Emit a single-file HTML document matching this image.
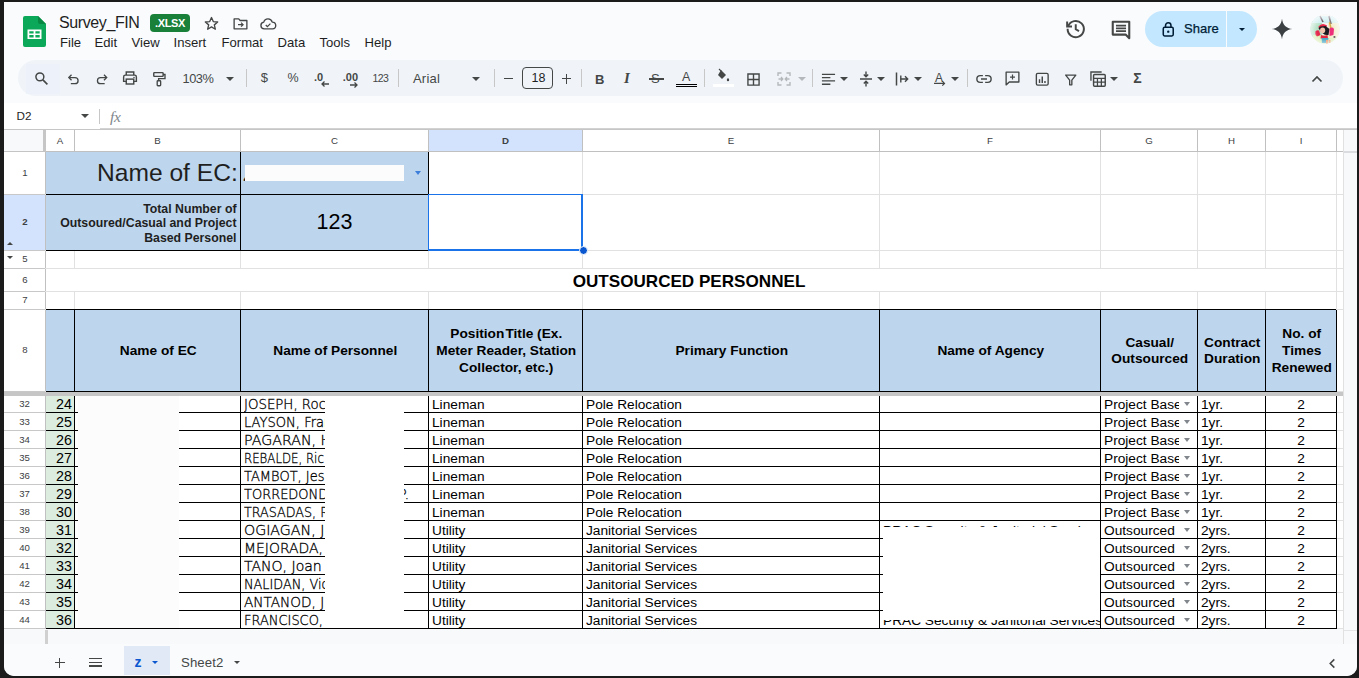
<!DOCTYPE html>
<html lang="en"><head><meta charset="utf-8"><title>Survey_FIN - Google Sheets</title>
<style>
*{box-sizing:border-box;margin:0;padding:0}
html,body{width:1359px;height:678px;overflow:hidden;background:#1b1b1b}
body{position:relative;font-family:"Liberation Sans","DejaVu Sans",sans-serif;color:#1f1f1f}
.abs{position:absolute}
#app{position:absolute;left:4px;top:2px;width:1353px;height:674px;background:#f9fbfd;border-radius:0 0 10px 10px;overflow:hidden}
/* everything inside #root positioned in page coordinates */
#root{position:absolute;left:-4px;top:-2px;width:1359px;height:678px}
.t{position:absolute;white-space:nowrap;line-height:1}
.menu{font-size:13.100px;color:#1f1f1f;top:36px}
.pill{position:absolute;left:18px;top:60px;width:1325px;height:36px;border-radius:18px;background:#f0f4f9}
.sep{position:absolute;top:69px;width:1px;height:18px;background:#c7c7c7}
.ic{position:absolute;overflow:visible}
.dd{position:absolute;width:0;height:0;border-left:4px solid transparent;border-right:4px solid transparent;border-top:4px solid #444746}
.hdr{position:absolute;background:#fff;color:#3c4043;font-size:9.700px;text-align:center}
.cell{position:absolute;overflow:hidden;white-space:nowrap}
.blue{background:#bed6ed}
.vl{position:absolute;width:1px;background:#e1e1e1}
.hl{position:absolute;height:1px;background:#e1e1e1}
.bk{position:absolute;background:#000}
.h8{position:absolute;padding:1.500px 0 0 1.500px;display:flex;align-items:center;justify-content:center;text-align:center;font-weight:bold;font-size:13.700px;line-height:16.600px;color:#000}
.d{position:absolute;font-size:13.700px;line-height:18px;height:18px;color:#000;white-space:nowrap;overflow:hidden}

.nm{font-family:"DejaVu Sans","Liberation Sans",sans-serif;font-weight:200;font-size:13.500px;-webkit-text-stroke:.3px #000;white-space:pre}
.rn{position:absolute;left:5px;width:40px;text-align:center;font-size:9.600px;color:#3c4043}
</style></head><body>
<div id="app"><div id="root">


<!-- sheets logo -->
<svg class="ic" style="left:23px;top:16px" width="23" height="31" viewBox="0 0 23 31">
 <path d="M2 0h13l8 8v21a2 2 0 0 1-2 2H2a2 2 0 0 1-2-2V2a2 2 0 0 1 2-2z" fill="#0aa858"/>
 <path d="M15 0l8 8h-6a2 2 0 0 1-2-2z" fill="#078943"/>
 <path d="M4.500 13.500h14v9.500h-14z M6.300 15.200v2.300h4.300v-2.300z M12.400 15.200v2.300h4.300v-2.300z M6.300 19.100v2.300h4.300v-2.300z M12.400 19.100v2.300h4.300v-2.300z" fill="#fff" fill-rule="evenodd"/>
</svg>
<div class="t" style="left:59px;top:15px;font-size:16px;color:#1f1f1f;letter-spacing:-.4px">Survey_FIN</div>
<div class="abs" style="left:150px;top:14px;width:40px;height:18px;border-radius:4px;background:#188038"></div>
<div class="t" style="left:155px;top:17.700px;font-size:11px;font-weight:bold;color:#fff;letter-spacing:-.35px">.XLSX</div>
<!-- star -->
<svg class="ic" style="left:202.800px;top:14.600px" width="17" height="17" viewBox="0 0 24 24"><path d="M12 3.600l2.500 5.700 6.200.55-4.700 4.100 1.400 6.100L12 16.800 6.600 20.050l1.400-6.100-4.700-4.100 6.200-.55z" fill="none" stroke="#444746" stroke-width="1.900" stroke-linejoin="round"/></svg>
<!-- move folder -->
<svg class="ic" style="left:231.500px;top:14.800px" width="17" height="17" viewBox="0 0 24 24"><path d="M3 5.500h6.500l2 2.300H21v11.700H3z" fill="none" stroke="#444746" stroke-width="1.900" stroke-linejoin="round"/><path d="M8.500 13.600h6.500M12.800 10.800l2.800 2.800-2.800 2.800" fill="none" stroke="#444746" stroke-width="1.800"/></svg>
<!-- cloud -->
<svg class="ic" style="left:259px;top:14.800px" width="18" height="18" viewBox="0 0 24 24"><path d="M7 18.500a4.500 4.500 0 0 1-.6-8.950A5.800 5.800 0 0 1 17.600 9.500 4.200 4.200 0 0 1 18 18.500z" fill="none" stroke="#444746" stroke-width="1.800" stroke-linejoin="round"/><path d="M9 13.300l2.200 2.200 4-4" fill="none" stroke="#444746" stroke-width="1.700"/></svg>

<div class="t menu" style="left:60px">File</div>
<div class="t menu" style="left:94.5px">Edit</div>
<div class="t menu" style="left:131.5px">View</div>
<div class="t menu" style="left:173.5px">Insert</div>
<div class="t menu" style="left:221.5px">Format</div>
<div class="t menu" style="left:277.5px">Data</div>
<div class="t menu" style="left:319.5px">Tools</div>
<div class="t menu" style="left:364.5px">Help</div>

<!-- history -->
<svg class="ic" style="left:1063.700px;top:17px" width="23.500" height="23.500" viewBox="0 0 24 24"><path d="M4.300 9.200A8.300 8.300 0 1 1 3.700 12" fill="none" stroke="#444746" stroke-width="2"/><path d="M3.200 4.600v5h5" fill="none" stroke="#444746" stroke-width="2"/><path d="M12 7.500v5l3.300 2" fill="none" stroke="#444746" stroke-width="2"/></svg>
<!-- comment -->
<svg class="ic" style="left:1110px;top:18.500px" width="22" height="22" viewBox="0 0 24 24"><path d="M3 3h18v18l-4-4H3z" fill="none" stroke="#444746" stroke-width="2.300" stroke-linejoin="round"/><path d="M6.500 7.200h11M6.500 10.200h11M6.500 13.200h11" stroke="#444746" stroke-width="1.900"/></svg>
<!-- share -->
<div class="abs" style="left:1145px;top:11px;width:81px;height:36px;border-radius:18px 0 0 18px;background:#c2e7ff"></div>
<div class="abs" style="left:1227px;top:11px;width:30px;height:36px;border-radius:0 18px 18px 0;background:#c2e7ff"></div>
<svg class="ic" style="left:1161.200px;top:20.500px" width="14.500" height="16.300" viewBox="0 0 16 18"><rect x="2.500" y="7" width="11" height="9.500" rx="1.500" fill="none" stroke="#001d35" stroke-width="1.700"/><path d="M5 7V5a3 3 0 0 1 6 0v2" fill="none" stroke="#001d35" stroke-width="1.700"/><circle cx="8" cy="11.800" r="1.300" fill="#001d35"/></svg>
<div class="t" style="left:1184px;top:21.500px;font-size:13px;color:#001d35;-webkit-text-stroke:.25px #001d35">Share</div>
<div class="dd" style="left:1238.500px;top:28px;border-top-color:#001d35;border-left-width:3.500px;border-right-width:3.500px;border-top-width:3.500px"></div>
<!-- gemini star -->
<svg class="ic" style="left:1270px;top:17px" width="24" height="24" viewBox="0 0 24 24"><path d="M12 1.500C12.600 7.800 16.200 11.400 22.500 12 16.200 12.600 12.600 16.200 12 22.500 11.400 16.200 7.800 12.600 1.500 12 7.800 11.400 11.400 7.800 12 1.500z" fill="#3c4043"/></svg>
<!-- avatar -->
<svg class="ic" style="left:1310px;top:14px" width="30" height="30" viewBox="0 0 30 30"><defs><clipPath id="av"><circle cx="15" cy="15" r="14.500"/></clipPath><radialGradient id="avg" cx="50%" cy="55%" r="50%"><stop offset="55%" stop-color="#fff" stop-opacity="0"/><stop offset="100%" stop-color="#fbfcfd" stop-opacity=".7"/></radialGradient></defs><g clip-path="url(#av)"><rect width="30" height="30" fill="#f4f2ee"/><path d="M0 7h12v16H0z" fill="#b4e1c6"/><path d="M3 21h24v9H3z" fill="#dcefb8"/><path d="M18 6h12v18H18z" fill="#f3eccb"/><path d="M2 2h26v7H2z" fill="#cdeef0"/><path d="M10 2l3 6M19 2l2 8" stroke="#5b4a55" stroke-width="1.600"/><path d="M19.500 8l2 9" stroke="#d8a84a" stroke-width="1.500"/><path d="M8.500 12.500q3.500-4.500 8.500-1l-1 3.500h-7z" fill="#e8274b"/><path d="M8.500 14q4 8 10 7l1-6-4-3-5 .5z" fill="#1c1c20"/><ellipse cx="12.600" cy="16.300" rx="2.600" ry="2.900" fill="#f2c4ae"/><path d="M5.500 17.500q1.500-2 3.500-1l1.500 4.500-3.500 1.500q-2.500-2-1.500-5z" fill="#e42a4c"/><path d="M11 21q3 1.500 6.500 0l.5 3.500h-7.500z" fill="#e62640"/><path d="M19.500 14.500q3-2 4.500.5l-.5 6-4 1z" fill="#ee2f7a"/><path d="M11.500 24h7l-.5 5h-6z" fill="#4aa7c4"/><path d="M16 26h2v4h-2zM18.800 26h1.700v4h-1.700z" fill="#f0936c"/><circle cx="24.500" cy="23" r="1.100" fill="#111"/><rect width="30" height="30" fill="url(#avg)"/></g></svg>

<div class="pill"></div>
<div class="abs" style="left:26px;top:64px;width:34px;height:30px;background:#edf2fa"></div>
<svg class="ic" style="left:33.3px;top:69.5px" width="17" height="17" viewBox="0 0 24 24"><circle cx="9.700" cy="9.700" r="5.600" fill="none" stroke="#444746" stroke-width="2.100"/><path d="M14 14l6.300 6.300" stroke="#444746" stroke-width="2.300"/></svg>
<svg class="ic" style="left:64.75px;top:70.75px" width="16.5" height="16.5" viewBox="0 0 24 24"><path d="M6.500 9.500H14.500a4.500 4.500 0 0 1 0 9H8.500" fill="none" stroke="#444746" stroke-width="1.900"/><path d="M9.500 5.500l-4 4 4 4" fill="none" stroke="#444746" stroke-width="1.900"/></svg>
<svg class="ic" style="left:93.55px;top:70.75px" width="16.5" height="16.5" viewBox="0 0 24 24"><path d="M17.500 9.500H9.500a4.500 4.500 0 0 0 0 9H15.500" fill="none" stroke="#444746" stroke-width="1.900"/><path d="M14.500 5.500l4 4-4 4" fill="none" stroke="#444746" stroke-width="1.900"/></svg>
<svg class="ic" style="left:121.0px;top:69.0px" width="18" height="18" viewBox="0 0 24 24"><path d="M7 8V4h10v4" fill="none" stroke="#444746" stroke-width="1.900"/><path d="M7 16.500H3.500v-6a2.300 2.300 0 0 1 2.300-2.300h12.400a2.300 2.300 0 0 1 2.300 2.300v6H17" fill="none" stroke="#444746" stroke-width="1.900"/><rect x="7" y="13.500" width="10" height="6.500" fill="none" stroke="#444746" stroke-width="1.900"/><circle cx="17.300" cy="11.200" r="1" fill="#444746"/></svg>
<svg class="ic" style="left:149.8px;top:69.5px" width="18" height="18" viewBox="0 0 24 24"><rect x="5" y="3.500" width="12.500" height="5" rx="1" fill="none" stroke="#444746" stroke-width="1.900"/><path d="M17.500 6H20v5.500h-8.500v3" fill="none" stroke="#444746" stroke-width="1.800"/><rect x="9.600" y="14.300" width="4.600" height="6.700" rx="1" fill="none" stroke="#444746" stroke-width="1.800"/></svg>
<div class="t" style="left:182.500px;top:73px;font-size:12.800px;letter-spacing:-.45px;color:#444746">103%</div>
<div class="dd" style="left:226px;top:77px;border-top-color:#444746"></div>
<div class="sep" style="left:246px"></div>
<div class="sep" style="left:398px"></div>
<div class="sep" style="left:494px"></div>
<div class="sep" style="left:581px"></div>
<div class="sep" style="left:704px"></div>
<div class="sep" style="left:812px"></div>
<div class="sep" style="left:966.5px"></div>
<div class="t" style="left:260.800px;top:71px;font-size:13px;color:#444746">$</div>
<div class="t" style="left:287.500px;top:72px;font-size:12.500px;color:#444746">%</div>
<div class="t" style="left:314px;top:71.500px;font-size:11px;font-weight:bold;color:#444746">.0</div>
<svg class="ic" style="left:321.0px;top:80.0px" width="8" height="8" viewBox="0 0 8 8"><path d="M8 4H1M3.500 1.500L1 4l2.500 2.500" fill="none" stroke="#444746" stroke-width="1.300"/></svg>
<div class="t" style="left:342.800px;top:71.500px;font-size:11px;font-weight:bold;color:#444746">.00</div>
<svg class="ic" style="left:350.0px;top:81.0px" width="8" height="8" viewBox="0 0 8 8"><path d="M0 4h7M4.500 1.500L7 4 4.500 6.500" fill="none" stroke="#444746" stroke-width="1.300"/></svg>
<div class="t" style="left:372.500px;top:73px;font-size:10.500px;letter-spacing:-.55px;color:#444746">123</div>
<div class="t" style="left:413px;top:72px;font-size:13px;color:#444746;letter-spacing:.2px">Arial</div>
<div class="dd" style="left:472px;top:77px;border-top-color:#444746"></div>
<div class="abs" style="left:503.500px;top:78.200px;width:9.500px;height:1.300px;background:#444746"></div>
<div class="abs" style="left:522px;top:67px;width:31px;height:22px;border:1px solid #444746;border-radius:4px"></div>
<div class="t" style="left:531.500px;top:72px;font-size:12.500px;color:#1f1f1f">18</div>
<div class="abs" style="left:561.700px;top:78.200px;width:9.600px;height:1.300px;background:#444746"></div><div class="abs" style="left:565.850px;top:74px;width:1.300px;height:9.600px;background:#444746"></div>
<div class="t" style="left:595px;top:72.500px;font-size:13px;font-weight:bold;color:#444746">B</div>
<div class="t" style="left:624px;top:71px;font-size:15px;font-style:italic;font-weight:bold;color:#444746;font-family:'Liberation Serif',serif">I</div>
<div class="t" style="left:651px;top:72px;font-size:13px;color:#444746">S</div><div class="abs" style="left:649px;top:78px;width:15px;height:1.500px;background:#444746"></div>
<div class="t" style="left:682px;top:70.500px;font-size:12.500px;color:#444746">A</div><div class="abs" style="left:676px;top:84px;width:21px;height:1px;background:#000"></div><div class="abs" style="left:676px;top:86px;width:21px;height:1px;background:#000"></div>
<svg class="ic" style="left:714.5px;top:67.5px" width="16" height="16" viewBox="0 0 24 24"><path d="M9 3l7.500 7.500-6 6L4.500 10.500z" fill="#444746"/><path d="M6 1.500l4 4" stroke="#444746" stroke-width="1.800"/><path d="M19.500 14.500c1 1.500 1.800 2.600 1.800 3.500a1.800 1.800 0 0 1-3.600 0c0-.9.800-2 1.800-3.500z" fill="#444746"/></svg>
<div class="abs" style="left:713px;top:84px;width:21px;height:3px;background:#fff"></div>
<svg class="ic" style="left:747.2px;top:72.5px" width="13" height="13" viewBox="0 0 14 14"><path d="M1 1h12v12H1zM7 1v12M1 7h12" fill="none" stroke="#444746" stroke-width="1.500"/></svg>
<svg class="ic" style="left:776.7px;top:72.0px" width="14" height="14" viewBox="0 0 14 14"><path d="M1 4V1h3.500M9.500 1H13v3M1 10v3h3.500M9.500 13H13v-3" fill="none" stroke="#b5b8bb" stroke-width="1.400"/><path d="M1.500 7h4M4 5l1.800 2L4 9M12.500 7h-4M10 5L8.200 7 10 9" fill="none" stroke="#b5b8bb" stroke-width="1.300"/></svg>
<div class="dd" style="left:798px;top:77px;border-top-color:#b5b8bb"></div>
<svg class="ic" style="left:820.7px;top:71.5px" width="15" height="15" viewBox="0 0 16 16"><path d="M1 2.500h14M1 6h9M1 9.500h14M1 13h9" stroke="#444746" stroke-width="1.500"/></svg>
<div class="dd" style="left:840px;top:77px;border-top-color:#444746"></div>
<svg class="ic" style="left:857.5px;top:71.0px" width="16" height="16" viewBox="0 0 16 16"><path d="M2 8h12" stroke="#444746" stroke-width="1.500"/><path d="M8 0.500v5M5.800 3.500L8 5.800l2.200-2.300M8 15.500v-5M5.800 12.500L8 10.200l2.200 2.300" fill="none" stroke="#444746" stroke-width="1.400"/></svg>
<div class="dd" style="left:877px;top:77px;border-top-color:#444746"></div>
<svg class="ic" style="left:894.0px;top:71.0px" width="16" height="16" viewBox="0 0 16 16"><path d="M2.500 1.500v13" stroke="#444746" stroke-width="1.500"/><path d="M6.800 4.500v7" stroke="#444746" stroke-width="1.400"/><path d="M6.800 8h7M11 5.300L13.700 8 11 10.700" fill="none" stroke="#444746" stroke-width="1.400"/></svg>
<div class="dd" style="left:914px;top:77px;border-top-color:#444746"></div>
<div class="t" style="left:935px;top:71.500px;font-size:12px;color:#444746">A</div>
<svg class="ic" style="left:934.25px;top:78.75px" width="10.5" height="10.5" viewBox="0 0 12 12"><path d="M0 5h12M9.500 2.500L12 5 9.500 7.500" fill="none" stroke="#444746" stroke-width="1.400"/></svg>
<div class="dd" style="left:951px;top:77px;border-top-color:#444746"></div>
<svg class="ic" style="left:975.3px;top:70.0px" width="18" height="18" viewBox="0 0 24 24"><path d="M10.500 7.500H7a4.500 4.500 0 0 0 0 9h3.500M13.500 7.500H17a4.500 4.500 0 0 1 0 9h-3.500M8 12h8" fill="none" stroke="#444746" stroke-width="1.900"/></svg>
<svg class="ic" style="left:1004.2px;top:70.3px" width="17" height="17" viewBox="0 0 24 24"><path d="M3 3h18v14H7.500L3 21z" fill="none" stroke="#444746" stroke-width="1.900" stroke-linejoin="round"/><path d="M12 6.500v7M8.500 10h7" stroke="#444746" stroke-width="1.700"/></svg>
<svg class="ic" style="left:1035.25px;top:72.05px" width="14.5" height="14.5" viewBox="0 0 16 16"><rect x="1.500" y="1.500" width="13" height="13" rx="1.500" fill="none" stroke="#444746" stroke-width="1.500"/><path d="M5 12V8M8 12V5M11 12v-2" stroke="#444746" stroke-width="1.600"/></svg>
<svg class="ic" style="left:1064.45px;top:72.75px" width="13.5" height="13.5" viewBox="0 0 16 16"><path d="M2 2.500h12L9.300 8.500V14H6.700V8.500z" fill="none" stroke="#444746" stroke-width="1.600" stroke-linejoin="round"/></svg>
<svg class="ic" style="left:1088.95px;top:69.75px" width="17.5" height="17.5" viewBox="0 0 18 18"><path d="M2 11V2h11" fill="none" stroke="#444746" stroke-width="1.400"/><rect x="4.700" y="4.700" width="12" height="12" rx="1" fill="none" stroke="#444746" stroke-width="1.500"/><path d="M4.700 8.500h12M4.700 12.500h12M8.700 8.500v8M12.700 8.500v8" stroke="#444746" stroke-width="1.300"/></svg>
<div class="dd" style="left:1110px;top:77px;border-top-color:#444746"></div>
<div class="t" style="left:1133.300px;top:71px;font-size:14px;font-weight:bold;color:#444746">&Sigma;</div>
<svg class="ic" style="left:1311.0px;top:73.0px" width="12" height="12" viewBox="0 0 12 12"><path d="M1.500 8.500L6 4l4.500 4.500" fill="none" stroke="#444746" stroke-width="1.700"/></svg>
<div class="abs" style="left:4px;top:103px;width:1353px;height:27px;background:#fff"></div>
<div class="abs" style="left:4px;top:129px;width:1353px;height:1px;background:#c6c6c6"></div><div class="abs" style="left:100px;top:128px;width:1257px;height:1px;background:#d2d2d2"></div>
<div class="t" style="left:16.500px;top:109.500px;font-size:11.700px;color:#1f1f1f">D2</div>
<div class="dd" style="left:80.6px;top:114px;border-top-color:#444746"></div>
<div class="abs" style="left:99px;top:109px;width:1px;height:15px;background:#c7c7c7"></div>
<div class="t" style="left:110px;top:108.500px;font-size:15.500px;font-style:italic;color:#80868b;font-family:'Liberation Serif',serif;letter-spacing:-.3px">fx</div>
<div class="abs" style="left:4px;top:130px;width:1353px;height:514px;background:#fff"></div>
<div class="abs" style="left:4px;top:130px;width:42px;height:22px;background:#f8f9fa"></div>
<div class="abs" style="left:43px;top:130px;width:3px;height:22px;background:#c6c6c6"></div>
<div class="abs" style="left:4px;top:151px;width:42px;height:1px;background:#c4c4c4"></div>
<div class="hdr" style="left:46px;top:130px;width:28px;height:21px;line-height:21px;background:#fff;font-weight:normal">A</div>
<div class="abs" style="left:74px;top:130px;width:1px;height:21px;background:#c0c0c0"></div>
<div class="hdr" style="left:75px;top:130px;width:165px;height:21px;line-height:21px;background:#fff;font-weight:normal">B</div>
<div class="abs" style="left:240px;top:130px;width:1px;height:21px;background:#c0c0c0"></div>
<div class="hdr" style="left:241px;top:130px;width:187px;height:21px;line-height:21px;background:#fff;font-weight:normal">C</div>
<div class="abs" style="left:428px;top:130px;width:1px;height:21px;background:#c0c0c0"></div>
<div class="hdr" style="left:429px;top:130px;width:153px;height:21px;line-height:21px;background:#d3e3fd;font-weight:bold">D</div>
<div class="abs" style="left:582px;top:130px;width:1px;height:21px;background:#c0c0c0"></div>
<div class="hdr" style="left:583px;top:130px;width:296px;height:21px;line-height:21px;background:#fff;font-weight:normal">E</div>
<div class="abs" style="left:879px;top:130px;width:1px;height:21px;background:#c0c0c0"></div>
<div class="hdr" style="left:880px;top:130px;width:220px;height:21px;line-height:21px;background:#fff;font-weight:normal">F</div>
<div class="abs" style="left:1100px;top:130px;width:1px;height:21px;background:#c0c0c0"></div>
<div class="hdr" style="left:1101px;top:130px;width:96px;height:21px;line-height:21px;background:#fff;font-weight:normal">G</div>
<div class="abs" style="left:1197px;top:130px;width:1px;height:21px;background:#c0c0c0"></div>
<div class="hdr" style="left:1198px;top:130px;width:67px;height:21px;line-height:21px;background:#fff;font-weight:normal">H</div>
<div class="abs" style="left:1265px;top:130px;width:1px;height:21px;background:#c0c0c0"></div>
<div class="hdr" style="left:1266px;top:130px;width:70px;height:21px;line-height:21px;background:#fff;font-weight:normal">I</div>
<div class="abs" style="left:1336px;top:130px;width:1px;height:21px;background:#c0c0c0"></div>
<div class="hdr" style="left:1337px;top:130px;width:6px;height:21px;line-height:21px;background:#fff;font-weight:normal"></div>
<div class="abs" style="left:1343px;top:130px;width:1px;height:21px;background:#c0c0c0"></div>
<div class="abs" style="left:46px;top:151px;width:1297px;height:1px;background:#c0c0c0"></div>
<div class="abs" style="left:1343px;top:130px;width:14px;height:514px;background:#f8f9fa"></div>
<div class="abs" style="left:1343px;top:151px;width:14px;height:2px;background:#dadce0"></div>
<div class="abs" style="left:1343px;top:130px;width:1px;height:514px;background:#e1e1e1"></div>
<div class="abs" style="left:4px;top:152px;width:41px;height:478px;background:#fff"></div>
<div class="abs" style="left:45px;top:152px;width:1px;height:478px;background:#c0c0c0"></div>
<div class="vl" style="left:74px;top:152px;height:158px"></div>
<div class="vl" style="left:240px;top:152px;height:158px"></div>
<div class="vl" style="left:428px;top:152px;height:158px"></div>
<div class="vl" style="left:582px;top:152px;height:158px"></div>
<div class="vl" style="left:879px;top:152px;height:158px"></div>
<div class="vl" style="left:1100px;top:152px;height:158px"></div>
<div class="vl" style="left:1197px;top:152px;height:158px"></div>
<div class="vl" style="left:1265px;top:152px;height:158px"></div>
<div class="vl" style="left:1336px;top:152px;height:158px"></div>
<div class="vl" style="left:1343px;top:152px;height:158px"></div>
<div class="hl" style="left:4px;top:194px;width:1339px"></div>
<div class="hl" style="left:4px;top:194px;width:41px;background:#c8c8c8"></div>
<div class="hl" style="left:4px;top:250px;width:1339px"></div>
<div class="hl" style="left:4px;top:250px;width:41px;background:#c8c8c8"></div>
<div class="hl" style="left:4px;top:268px;width:1339px"></div>
<div class="hl" style="left:4px;top:268px;width:41px;background:#c8c8c8"></div>
<div class="hl" style="left:4px;top:291px;width:1339px"></div>
<div class="hl" style="left:4px;top:291px;width:41px;background:#c8c8c8"></div>
<div class="hl" style="left:4px;top:309px;width:1339px"></div>
<div class="hl" style="left:4px;top:309px;width:41px;background:#c8c8c8"></div>
<div class="hl" style="left:4px;top:391px;width:1339px"></div>
<div class="hl" style="left:4px;top:391px;width:41px;background:#c8c8c8"></div>
<div class="abs" style="left:46px;top:269px;width:1290px;height:22px;background:#fff"></div>
<div class="rn t" style="top:167.5px;font-weight:normal;left:5px;width:40px">1</div>
<div class="abs" style="left:4px;top:195px;width:41px;height:55px;background:#d3e3fd"></div>
<div class="rn t" style="top:217.0px;font-weight:bold;left:5px;width:40px">2</div>
<div class="rn t" style="top:254.0px;font-weight:normal;left:5px;width:40px">5</div>
<div class="rn t" style="top:274.5px;font-weight:normal;left:5px;width:40px">6</div>
<div class="rn t" style="top:295.0px;font-weight:normal;left:5px;width:40px">7</div>
<div class="rn t" style="top:345.0px;font-weight:normal;left:5px;width:40px">8</div>
<div class="abs" style="left:7px;top:242px;width:0;height:0;border-left:3.500px solid transparent;border-right:3.500px solid transparent;border-bottom:3.500px solid #444746"></div>
<div class="abs" style="left:7px;top:256px;width:0;height:0;border-left:3.500px solid transparent;border-right:3.500px solid transparent;border-top:3.500px solid #444746"></div>
<div class="abs blue" style="left:46px;top:152px;width:382px;height:98px"></div>
<div class="bk" style="left:240px;top:152px;width:1px;height:99px"></div>
<div class="bk" style="left:428px;top:152px;width:1px;height:99px"></div>
<div class="bk" style="left:46px;top:194px;width:383px;height:1px"></div>
<div class="bk" style="left:46px;top:250px;width:383px;height:1px"></div>
<div class="t" style="left:97px;top:161px;font-size:24.600px;color:#1f1f1f">Name of EC:</div>
<div class="t" style="left:243px;top:161px;font-size:24.600px;color:#1f1f1f;width:4px;overflow:hidden;clip-path:inset(55% 0 0 0)">Z</div>
<div class="abs" style="left:245px;top:165px;width:159px;height:16px;background:#fcfcfc"></div>
<div class="dd" style="left:415px;top:171.300px;border-top-color:#3d7edb;border-left-width:3.700px;border-right-width:3.700px;border-top-width:4px"></div>
<div class="abs" style="left:50px;top:201.500px;width:186.500px;text-align:right;font-size:12.300px;font-weight:bold;line-height:14.600px;color:#1f1f1f">Total Number of<br>Outsoured/Casual and Project<br>Based Personel</div>
<div class="t" style="left:241px;top:212px;width:187px;text-align:center;font-size:21.500px;color:#000">123</div>
<div class="abs" style="left:428px;top:194px;width:155px;height:57px;border:solid #1a73e8;border-width:1px 2px 2px 1px;background:#fff"></div>
<div class="abs" style="left:578.800px;top:245.800px;width:9px;height:9px;border-radius:50%;background:#0b57d0;border:1px solid #fff"></div>
<div class="t" style="left:44px;top:272.500px;width:1290px;text-align:center;font-size:17.100px;font-weight:bold;color:#000">OUTSOURCED PERSONNEL</div>
<div class="abs blue" style="left:46px;top:310px;width:1290px;height:81px"></div>
<div class="bk" style="left:46px;top:309px;width:1291px;height:1px"></div>
<div class="bk" style="left:46px;top:391px;width:1291px;height:1px"></div>
<div class="bk" style="left:74px;top:309px;width:1px;height:83px"></div>
<div class="bk" style="left:240px;top:309px;width:1px;height:83px"></div>
<div class="bk" style="left:428px;top:309px;width:1px;height:83px"></div>
<div class="bk" style="left:582px;top:309px;width:1px;height:83px"></div>
<div class="bk" style="left:879px;top:309px;width:1px;height:83px"></div>
<div class="bk" style="left:1100px;top:309px;width:1px;height:83px"></div>
<div class="bk" style="left:1197px;top:309px;width:1px;height:83px"></div>
<div class="bk" style="left:1265px;top:309px;width:1px;height:83px"></div>
<div class="bk" style="left:1336px;top:309px;width:1px;height:83px"></div>
<div class="h8" style="left:75px;top:310px;width:165px;height:81px">Name of EC</div>
<div class="h8" style="left:241px;top:310px;width:187px;height:81px">Name of Personnel</div>
<div class="h8" style="left:429px;top:310px;width:153px;height:81px">Position&#8202;Title (Ex.<br>Meter Reader, Station<br>Collector, etc.)</div>
<div class="h8" style="left:583px;top:310px;width:296px;height:81px">Primary Function</div>
<div class="h8" style="left:880px;top:310px;width:220px;height:81px">Name of Agency</div>
<div class="h8" style="left:1101px;top:310px;width:96px;height:81px">Casual/<br>Outsourced</div>
<div class="h8" style="left:1198px;top:310px;width:67px;height:81px">Contract<br>Duration</div>
<div class="h8" style="left:1266px;top:310px;width:70px;height:81px">No. of<br>Times<br>Renewed</div>
<div class="abs" style="left:4px;top:392px;width:1339px;height:4px;background:#c6c6c6"></div>
<div class="rn t" style="top:398.5px;left:4px;width:41px">32</div>
<div class="abs" style="left:46px;top:396px;width:28px;height:16px;background:#dcecdf"></div>
<div class="d" style="left:46px;top:395px;width:26px;text-align:right;font-size:14.300px">24</div>
<div class="d nm" style="left:244.400px;top:394.5px;width:120px;transform:scaleX(0.9878);transform-origin:0 0">JOSEPH, Roc</div>
<div class="d" style="left:432px;top:395.5px;width:150px">Lineman</div>
<div class="d" style="left:586px;top:395.5px;width:290px">Pole Relocation</div>
<div class="d" style="left:1104px;top:395.5px;width:75px">Project Based</div>
<div class="dd" style="left:1184px;top:402px;border-top-color:#80868b;border-left-width:3.800px;border-right-width:3.800px"></div>
<div class="d" style="left:1201px;top:395.5px;width:64px">1yr.</div>
<div class="d" style="left:1266px;top:395.5px;width:70px;text-align:center">2</div>
<div class="bk" style="left:46px;top:412px;width:1291px;height:1px"></div>
<div class="hl" style="left:4px;top:412px;width:41px;background:#c8c8c8"></div>
<div class="hl" style="left:1337px;top:412px;width:6px"></div>
<div class="rn t" style="top:416.5px;left:4px;width:41px">33</div>
<div class="abs" style="left:46px;top:413px;width:28px;height:17px;background:#dcecdf"></div>
<div class="d" style="left:46px;top:413px;width:26px;text-align:right;font-size:14.300px">25</div>
<div class="d nm" style="left:244.400px;top:412.5px;width:120px;transform:scaleX(0.968);transform-origin:0 0">LAYSON, Fran</div>
<div class="d" style="left:432px;top:413.5px;width:150px">Lineman</div>
<div class="d" style="left:586px;top:413.5px;width:290px">Pole Relocation</div>
<div class="d" style="left:1104px;top:413.5px;width:75px">Project Based</div>
<div class="dd" style="left:1184px;top:420px;border-top-color:#80868b;border-left-width:3.800px;border-right-width:3.800px"></div>
<div class="d" style="left:1201px;top:413.5px;width:64px">1yr.</div>
<div class="d" style="left:1266px;top:413.5px;width:70px;text-align:center">2</div>
<div class="bk" style="left:46px;top:430px;width:1291px;height:1px"></div>
<div class="hl" style="left:4px;top:430px;width:41px;background:#c8c8c8"></div>
<div class="hl" style="left:1337px;top:430px;width:6px"></div>
<div class="rn t" style="top:434.5px;left:4px;width:41px">34</div>
<div class="abs" style="left:46px;top:431px;width:28px;height:17px;background:#dcecdf"></div>
<div class="d" style="left:46px;top:431px;width:26px;text-align:right;font-size:14.300px">26</div>
<div class="d nm" style="left:244.400px;top:430.5px;width:120px;transform:scaleX(1.0531);transform-origin:0 0">PAGARAN, H</div>
<div class="d" style="left:432px;top:431.5px;width:150px">Lineman</div>
<div class="d" style="left:586px;top:431.5px;width:290px">Pole Relocation</div>
<div class="d" style="left:1104px;top:431.5px;width:75px">Project Based</div>
<div class="dd" style="left:1184px;top:438px;border-top-color:#80868b;border-left-width:3.800px;border-right-width:3.800px"></div>
<div class="d" style="left:1201px;top:431.5px;width:64px">1yr.</div>
<div class="d" style="left:1266px;top:431.5px;width:70px;text-align:center">2</div>
<div class="bk" style="left:46px;top:448px;width:1291px;height:1px"></div>
<div class="hl" style="left:4px;top:448px;width:41px;background:#c8c8c8"></div>
<div class="hl" style="left:1337px;top:448px;width:6px"></div>
<div class="rn t" style="top:452.5px;left:4px;width:41px">35</div>
<div class="abs" style="left:46px;top:449px;width:28px;height:17px;background:#dcecdf"></div>
<div class="d" style="left:46px;top:449px;width:26px;text-align:right;font-size:14.300px">27</div>
<div class="d nm" style="left:244.400px;top:448.5px;width:120px;transform:scaleX(0.8722);transform-origin:0 0">REBALDE, Ric</div>
<div class="d" style="left:432px;top:449.5px;width:150px">Lineman</div>
<div class="d" style="left:586px;top:449.5px;width:290px">Pole Relocation</div>
<div class="d" style="left:1104px;top:449.5px;width:75px">Project Based</div>
<div class="dd" style="left:1184px;top:456px;border-top-color:#80868b;border-left-width:3.800px;border-right-width:3.800px"></div>
<div class="d" style="left:1201px;top:449.5px;width:64px">1yr.</div>
<div class="d" style="left:1266px;top:449.5px;width:70px;text-align:center">2</div>
<div class="bk" style="left:46px;top:466px;width:1291px;height:1px"></div>
<div class="hl" style="left:4px;top:466px;width:41px;background:#c8c8c8"></div>
<div class="hl" style="left:1337px;top:466px;width:6px"></div>
<div class="rn t" style="top:470.5px;left:4px;width:41px">36</div>
<div class="abs" style="left:46px;top:467px;width:28px;height:17px;background:#dcecdf"></div>
<div class="d" style="left:46px;top:467px;width:26px;text-align:right;font-size:14.300px">28</div>
<div class="d nm" style="left:244.400px;top:466.5px;width:120px;transform:scaleX(0.9644);transform-origin:0 0">TAMBOT, Jes</div>
<div class="d" style="left:432px;top:467.5px;width:150px">Lineman</div>
<div class="d" style="left:586px;top:467.5px;width:290px">Pole Relocation</div>
<div class="d" style="left:1104px;top:467.5px;width:75px">Project Based</div>
<div class="dd" style="left:1184px;top:474px;border-top-color:#80868b;border-left-width:3.800px;border-right-width:3.800px"></div>
<div class="d" style="left:1201px;top:467.5px;width:64px">1yr.</div>
<div class="d" style="left:1266px;top:467.5px;width:70px;text-align:center">2</div>
<div class="bk" style="left:46px;top:484px;width:1291px;height:1px"></div>
<div class="hl" style="left:4px;top:484px;width:41px;background:#c8c8c8"></div>
<div class="hl" style="left:1337px;top:484px;width:6px"></div>
<div class="rn t" style="top:488.5px;left:4px;width:41px">37</div>
<div class="abs" style="left:46px;top:485px;width:28px;height:17px;background:#dcecdf"></div>
<div class="d" style="left:46px;top:485px;width:26px;text-align:right;font-size:14.300px">29</div>
<div class="d nm" style="left:244.400px;top:484.5px;width:120px;transform:scaleX(0.9612);transform-origin:0 0">TORREDOND</div>
<div class="d" style="left:432px;top:485.5px;width:150px">Lineman</div>
<div class="d" style="left:586px;top:485.5px;width:290px">Pole Relocation</div>
<div class="d" style="left:1104px;top:485.5px;width:75px">Project Based</div>
<div class="dd" style="left:1184px;top:492px;border-top-color:#80868b;border-left-width:3.800px;border-right-width:3.800px"></div>
<div class="d" style="left:1201px;top:485.5px;width:64px">1yr.</div>
<div class="d" style="left:1266px;top:485.5px;width:70px;text-align:center">2</div>
<div class="bk" style="left:46px;top:502px;width:1291px;height:1px"></div>
<div class="hl" style="left:4px;top:502px;width:41px;background:#c8c8c8"></div>
<div class="hl" style="left:1337px;top:502px;width:6px"></div>
<div class="rn t" style="top:506.5px;left:4px;width:41px">38</div>
<div class="abs" style="left:46px;top:503px;width:28px;height:17px;background:#dcecdf"></div>
<div class="d" style="left:46px;top:503px;width:26px;text-align:right;font-size:14.300px">30</div>
<div class="d nm" style="left:244.400px;top:502.5px;width:120px;transform:scaleX(0.9416);transform-origin:0 0">TRASADAS, R</div>
<div class="d" style="left:432px;top:503.5px;width:150px">Lineman</div>
<div class="d" style="left:586px;top:503.5px;width:290px">Pole Relocation</div>
<div class="d" style="left:1104px;top:503.5px;width:75px">Project Based</div>
<div class="dd" style="left:1184px;top:510px;border-top-color:#80868b;border-left-width:3.800px;border-right-width:3.800px"></div>
<div class="d" style="left:1201px;top:503.5px;width:64px">1yr.</div>
<div class="d" style="left:1266px;top:503.5px;width:70px;text-align:center">2</div>
<div class="bk" style="left:46px;top:520px;width:1291px;height:1px"></div>
<div class="hl" style="left:4px;top:520px;width:41px;background:#c8c8c8"></div>
<div class="hl" style="left:1337px;top:520px;width:6px"></div>
<div class="rn t" style="top:524.5px;left:4px;width:41px">39</div>
<div class="abs" style="left:46px;top:521px;width:28px;height:17px;background:#dcecdf"></div>
<div class="d" style="left:46px;top:521px;width:26px;text-align:right;font-size:14.300px">31</div>
<div class="d nm" style="left:244.400px;top:520.5px;width:120px;transform:scaleX(1.0517);transform-origin:0 0">OGIAGAN, J</div>
<div class="d" style="left:432px;top:521.5px;width:150px">Utility</div>
<div class="d" style="left:586px;top:521.5px;width:290px">Janitorial Services</div>
<div class="d" style="left:1104px;top:521.5px;width:75px">Outsourced</div>
<div class="dd" style="left:1184px;top:528px;border-top-color:#80868b;border-left-width:3.800px;border-right-width:3.800px"></div>
<div class="d" style="left:1201px;top:521.5px;width:64px">2yrs.</div>
<div class="d" style="left:1266px;top:521.5px;width:70px;text-align:center">2</div>
<div class="d" style="left:883px;top:521.5px;width:217px">PRAC Security &amp; Janitorial Services</div>
<div class="bk" style="left:46px;top:538px;width:1291px;height:1px"></div>
<div class="hl" style="left:4px;top:538px;width:41px;background:#c8c8c8"></div>
<div class="hl" style="left:1337px;top:538px;width:6px"></div>
<div class="rn t" style="top:542.5px;left:4px;width:41px">40</div>
<div class="abs" style="left:46px;top:539px;width:28px;height:17px;background:#dcecdf"></div>
<div class="d" style="left:46px;top:539px;width:26px;text-align:right;font-size:14.300px">32</div>
<div class="d nm" style="left:244.400px;top:538.5px;width:120px;transform:scaleX(1.032);transform-origin:0 0">MEJORADA,</div>
<div class="d" style="left:432px;top:539.5px;width:150px">Utility</div>
<div class="d" style="left:586px;top:539.5px;width:290px">Janitorial Services</div>
<div class="d" style="left:1104px;top:539.5px;width:75px">Outsourced</div>
<div class="dd" style="left:1184px;top:546px;border-top-color:#80868b;border-left-width:3.800px;border-right-width:3.800px"></div>
<div class="d" style="left:1201px;top:539.5px;width:64px">2yrs.</div>
<div class="d" style="left:1266px;top:539.5px;width:70px;text-align:center">2</div>
<div class="d" style="left:883px;top:539.5px;width:217px">PRAC Security &amp; Janitorial Services</div>
<div class="bk" style="left:46px;top:556px;width:1291px;height:1px"></div>
<div class="hl" style="left:4px;top:556px;width:41px;background:#c8c8c8"></div>
<div class="hl" style="left:1337px;top:556px;width:6px"></div>
<div class="rn t" style="top:560.5px;left:4px;width:41px">41</div>
<div class="abs" style="left:46px;top:557px;width:28px;height:17px;background:#dcecdf"></div>
<div class="d" style="left:46px;top:557px;width:26px;text-align:right;font-size:14.300px">33</div>
<div class="d nm" style="left:244.400px;top:556.5px;width:120px;transform:scaleX(1.0386);transform-origin:0 0">TANO, Joan</div>
<div class="d" style="left:432px;top:557.5px;width:150px">Utility</div>
<div class="d" style="left:586px;top:557.5px;width:290px">Janitorial Services</div>
<div class="d" style="left:1104px;top:557.5px;width:75px">Outsourced</div>
<div class="dd" style="left:1184px;top:564px;border-top-color:#80868b;border-left-width:3.800px;border-right-width:3.800px"></div>
<div class="d" style="left:1201px;top:557.5px;width:64px">2yrs.</div>
<div class="d" style="left:1266px;top:557.5px;width:70px;text-align:center">2</div>
<div class="d" style="left:883px;top:557.5px;width:217px">PRAC Security &amp; Janitorial Services</div>
<div class="bk" style="left:46px;top:574px;width:1291px;height:1px"></div>
<div class="hl" style="left:4px;top:574px;width:41px;background:#c8c8c8"></div>
<div class="hl" style="left:1337px;top:574px;width:6px"></div>
<div class="rn t" style="top:578.5px;left:4px;width:41px">42</div>
<div class="abs" style="left:46px;top:575px;width:28px;height:17px;background:#dcecdf"></div>
<div class="d" style="left:46px;top:575px;width:26px;text-align:right;font-size:14.300px">34</div>
<div class="d nm" style="left:244.400px;top:574.5px;width:120px;transform:scaleX(0.9496);transform-origin:0 0">NALIDAN, Vic</div>
<div class="d" style="left:432px;top:575.5px;width:150px">Utility</div>
<div class="d" style="left:586px;top:575.5px;width:290px">Janitorial Services</div>
<div class="d" style="left:1104px;top:575.5px;width:75px">Outsourced</div>
<div class="dd" style="left:1184px;top:582px;border-top-color:#80868b;border-left-width:3.800px;border-right-width:3.800px"></div>
<div class="d" style="left:1201px;top:575.5px;width:64px">2yrs.</div>
<div class="d" style="left:1266px;top:575.5px;width:70px;text-align:center">2</div>
<div class="d" style="left:883px;top:575.5px;width:217px">PRAC Security &amp; Janitorial Services</div>
<div class="bk" style="left:46px;top:592px;width:1291px;height:1px"></div>
<div class="hl" style="left:4px;top:592px;width:41px;background:#c8c8c8"></div>
<div class="hl" style="left:1337px;top:592px;width:6px"></div>
<div class="rn t" style="top:596.5px;left:4px;width:41px">43</div>
<div class="abs" style="left:46px;top:593px;width:28px;height:17px;background:#dcecdf"></div>
<div class="d" style="left:46px;top:593px;width:26px;text-align:right;font-size:14.300px">35</div>
<div class="d nm" style="left:244.400px;top:592.5px;width:120px;transform:scaleX(1.0095);transform-origin:0 0">ANTANOD, J</div>
<div class="d" style="left:432px;top:593.5px;width:150px">Utility</div>
<div class="d" style="left:586px;top:593.5px;width:290px">Janitorial Services</div>
<div class="d" style="left:1104px;top:593.5px;width:75px">Outsourced</div>
<div class="dd" style="left:1184px;top:600px;border-top-color:#80868b;border-left-width:3.800px;border-right-width:3.800px"></div>
<div class="d" style="left:1201px;top:593.5px;width:64px">2yrs.</div>
<div class="d" style="left:1266px;top:593.5px;width:70px;text-align:center">2</div>
<div class="d" style="left:883px;top:593.5px;width:217px">PRAC Security &amp; Janitorial Services</div>
<div class="bk" style="left:46px;top:610px;width:1291px;height:1px"></div>
<div class="hl" style="left:4px;top:610px;width:41px;background:#c8c8c8"></div>
<div class="hl" style="left:1337px;top:610px;width:6px"></div>
<div class="rn t" style="top:614.5px;left:4px;width:41px">44</div>
<div class="abs" style="left:46px;top:611px;width:28px;height:17px;background:#dcecdf"></div>
<div class="d" style="left:46px;top:611px;width:26px;text-align:right;font-size:14.300px">36</div>
<div class="d nm" style="left:244.400px;top:610.5px;width:120px;transform:scaleX(0.9603);transform-origin:0 0">FRANCISCO,</div>
<div class="d" style="left:432px;top:611.5px;width:150px">Utility</div>
<div class="d" style="left:586px;top:611.5px;width:290px">Janitorial Services</div>
<div class="d" style="left:1104px;top:611.5px;width:75px">Outsourced</div>
<div class="dd" style="left:1184px;top:618px;border-top-color:#80868b;border-left-width:3.800px;border-right-width:3.800px"></div>
<div class="d" style="left:1201px;top:611.5px;width:64px">2yrs.</div>
<div class="d" style="left:1266px;top:611.5px;width:70px;text-align:center">2</div>
<div class="d" style="left:883px;top:611.5px;width:217px">PRAC Security &amp; Janitorial Services</div>
<div class="bk" style="left:46px;top:628px;width:1291px;height:1px"></div>
<div class="hl" style="left:4px;top:628px;width:41px;background:#c8c8c8"></div>
<div class="hl" style="left:1337px;top:628px;width:6px"></div>
<div class="bk" style="left:74px;top:396px;width:1px;height:233px"></div>
<div class="bk" style="left:240px;top:396px;width:1px;height:233px"></div>
<div class="bk" style="left:428px;top:396px;width:1px;height:233px"></div>
<div class="bk" style="left:582px;top:396px;width:1px;height:233px"></div>
<div class="bk" style="left:879px;top:396px;width:1px;height:233px"></div>
<div class="bk" style="left:1100px;top:396px;width:1px;height:233px"></div>
<div class="bk" style="left:1197px;top:396px;width:1px;height:233px"></div>
<div class="bk" style="left:1265px;top:396px;width:1px;height:233px"></div>
<div class="bk" style="left:1336px;top:396px;width:1px;height:233px"></div>
<div class="vl" style="left:1343px;top:152px;height:476px"></div>
<div class="vl" style="left:1336px;top:152px;height:158px"></div>
<div class="abs" style="left:78px;top:396px;width:101px;height:232px;background:#fcfcfc"></div>
<div class="d nm" style="left:398.600px;top:484.5px;width:20px">P.</div>
<div class="abs" style="left:325px;top:396px;width:79px;height:232px;background:#fff"></div>
<div class="abs" style="left:883px;top:527px;width:217px;height:93px;background:#fff"></div>
<div class="abs" style="left:4px;top:629px;width:1353px;height:15px;background:#f8f9fa"></div>
<div class="abs" style="left:45px;top:630px;width:3px;height:14px;background:#d0d0d0"></div>
<div class="abs" style="left:1343px;top:630px;width:14px;height:1px;background:#e4e4e4"></div>
<div class="vl" style="left:1343px;top:628px;height:16px"></div>
<div class="abs" style="left:4px;top:644px;width:1353px;height:34px;background:#f9fbfd"></div>
<div class="abs" style="left:55px;top:662.200px;width:9.500px;height:1.200px;background:#444746"></div><div class="abs" style="left:59.150px;top:658px;width:1.200px;height:9.500px;background:#444746"></div>
<div class="abs" style="left:89px;top:658px;width:13px;height:1.300px;background:#444746"></div><div class="abs" style="left:89px;top:661.700px;width:13px;height:1.300px;background:#444746"></div><div class="abs" style="left:89px;top:665.400px;width:13px;height:1.300px;background:#444746"></div>
<div class="abs" style="left:124px;top:646px;width:46px;height:29px;background:#e1e9f7"></div>
<div class="abs" style="left:125px;top:675px;width:44px;height:1px;background:#fff"></div>
<div class="t" style="left:134.500px;top:655px;font-size:14px;font-weight:bold;color:#0b57d0">z</div>
<div class="dd" style="left:151.700px;top:661px;border-top-color:#0b57d0;border-left-width:3.500px;border-right-width:3.500px;border-top-width:3.500px"></div>
<div class="t" style="left:181px;top:656px;font-size:13.200px;color:#444746;letter-spacing:.1px">Sheet2</div>
<div class="dd" style="left:234px;top:661px;border-left-width:3.500px;border-right-width:3.500px;border-top-width:3.500px"></div>
<svg class="ic" style="left:1326.8px;top:657.8px" width="11" height="11" viewBox="0 0 12 12"><path d="M8 1.500L3.500 6 8 10.500" fill="none" stroke="#444746" stroke-width="1.700"/></svg>
</div></div></body></html>
